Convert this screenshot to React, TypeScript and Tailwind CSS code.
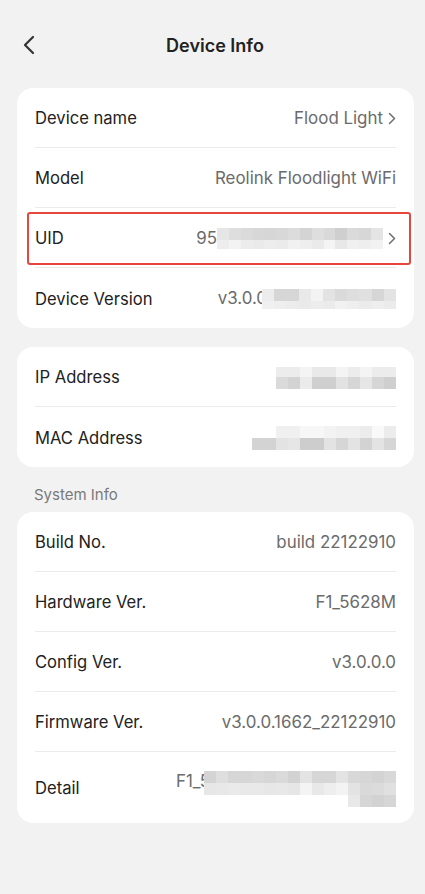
import React from "react";

function Pix({ rows, width }: { rows: { h: number; cells: string[]; offset?: number }[]; width: number }) {
  return (
    <div className="flex flex-col" style={{ width }}>
      {rows.map((r, i) => {
        const cw = (width - (r.offset || 0)) / r.cells.length;
        return (
          <div key={i} className="flex" style={{ height: r.h, marginLeft: r.offset || 0 }}>
            {r.cells.map((c, j) => (
              <div key={j} style={{ width: cw, height: r.h, background: c }} />
            ))}
          </div>
        );
      })}
    </div>
  );
}

function Chevron() {
  return (
    <svg width="8" height="13" viewBox="0 0 8 13" className="ml-[5px] shrink-0">
      <path d="M1.5 1.5 L6.5 6.5 L1.5 11.5" fill="none" stroke="#6e6e6e" strokeWidth="1.5" strokeLinecap="round" strokeLinejoin="round" />
    </svg>
  );
}

function Row({ label, children, last, tall }: { label: string; children?: React.ReactNode; last?: boolean; tall?: boolean }) {
  return (
    <div className={`mx-[18px] pt-[2px] flex items-center justify-between ${tall ? "h-[71px]" : "h-[60px]"} ${last ? "" : "border-b border-[#ebebeb]"}`}>
      <span className="text-[16.6px] text-[#222222] whitespace-nowrap">{label}</span>
      <div className="flex items-center text-[16.9px] text-[#6b6b6b] whitespace-nowrap">{children}</div>
    </div>
  );
}

export default function App() {
  return (
    <div className="min-h-[894px] w-[425px] bg-[#f2f2f2] pb-[40px]" style={{ fontFamily: "Inter, 'Noto Sans', sans-serif" }}>
      <div className="relative h-[88px] flex items-center justify-center">
        <svg width="14" height="20" viewBox="0 0 14 20" className="absolute left-[22px] top-[35px]">
          <path d="M11 2 L3 10 L11 18" fill="none" stroke="#333333" strokeWidth="2.2" strokeLinecap="round" strokeLinejoin="round" />
        </svg>
        <span className="text-[18px] font-semibold text-[#222222] mt-[2px] ml-[5px]">Device Info</span>
      </div>

      <div className="ml-[17px] w-[397px] bg-white rounded-[16px]">
        <Row label="Device name">
          <span>Flood Light</span>
          <Chevron />
        </Row>
        <Row label="Model">
          <span>Reolink Floodlight WiFi</span>
        </Row>
        <div className="relative">
          <div className="absolute left-[10px] right-[3px] top-[4px] bottom-[3px] border-2 border-[#e8463c] rounded-[3px] z-10" />
          <Row label="UID">
            <span>95</span>
            <Pix
              width={166}
              rows={[
                { h: 12, cells: ["#e6e6e6", "#dedede", "#dadada", "#d7d7d7", "#d6d6d6", "#d8d8d8", "#dcdcdc", "#d4d4d4", "#dedede", "#d9d9d9", "#cfcfcf", "#dadada", "#d7d7d7", "#e4e4e4"] },
                { h: 9, cells: ["#ededed", "#f3f3f3", "#ececec", "#eaeaea", "#ededed", "#ebebeb", "#f1f1f1", "#eeeeee", "#eaeaea", "#f4f4f4", "#e8e8e8", "#f0f0f0", "#eeeeee", "#f2f2f2"] },
              ]}
            />
            <Chevron />
          </Row>
        </div>
        <Row label="Device Version" last>
          <span>v3.0.0</span>
          <div className="-ml-[5px]">
            <Pix
              width={134}
              rows={[
                { h: 12, cells: ["#ececec", "#d6d6d6", "#d6d6d6", "#e9e9e9", "#f3f3f3", "#e3e3e3", "#dadada", "#dedede", "#e0e0e0", "#d6d6d6", "#e3e3e3"] },
                { h: 8, cells: ["#f0f0f0", "#eeeeee", "#ececec", "#eaeaea", "#ededed", "#ebebeb", "#f1f1f1", "#eeeeee", "#ebebeb", "#eeeeee", "#ebebeb"] },
              ]}
            />
          </div>
        </Row>
      </div>

      <div className="ml-[17px] w-[397px] mt-[19px] bg-white rounded-[16px]">
        <Row label="IP Address">
          <Pix
            width={120}
            rows={[
              { h: 10, cells: ["#ececec", "#ececec", "#f4f4f4", "#e9e9e9", "#e9e9e9", "#f4f4f4", "#ececec", "#f4f4f4", "#ececec", "#ececec"] },
              { h: 12, cells: ["#dadada", "#d3d3d3", "#ebebeb", "#cfcfcf", "#cfcfcf", "#e2e2e2", "#d6d6d6", "#e6e6e6", "#d6d6d6", "#cfcfcf"] },
            ]}
          />
        </Row>
        <Row label="MAC Address" last>
          <Pix
            width={144}
            rows={[
              { h: 12, offset: 24, cells: ["#f0f0f0", "#f0f0f0", "#f7f7f7", "#f7f7f7", "#f3f3f3", "#f0f0f0", "#f0f0f0", "#ececec", "#f9f9f9", "#ececec"] },
              { h: 12, cells: ["#d3d3d3", "#d3d3d3", "#e3e3e3", "#e6e6e6", "#cdcdcd", "#cdcdcd", "#e3e3e3", "#d6d6d6", "#e3e3e3", "#d3d3d3", "#e3e3e3", "#d6d6d6"] },
            ]}
          />
        </Row>
      </div>

      <div className="px-[34px] pt-[19px] pb-[9px] h-[45px] text-[15px] leading-[17px] text-[#7a7a7a]">System Info</div>

      <div className="ml-[17px] w-[397px] bg-white rounded-[16px]">
        <Row label="Build No.">
          <span>build 22122910</span>
        </Row>
        <Row label="Hardware Ver.">
          <span>F1_5628M</span>
        </Row>
        <Row label="Config Ver.">
          <span>v3.0.0.0</span>
        </Row>
        <Row label="Firmware Ver.">
          <span>v3.0.0.1662_22122910</span>
        </Row>
        <Row label="Detail" last tall>
          <div className="flex flex-col items-end">
            <div className="flex items-start">
              <span className="leading-[20px] -mr-[6px]">F1_5</span>
              <Pix
                width={192}
                rows={[
                  { h: 12, cells: ["#d4d4d4", "#dedede", "#d6d6d6", "#d6d6d6", "#d9d9d9", "#d6d6d6", "#dadada", "#d2d2d2", "#e3e3e3", "#d6d6d6", "#d6d6d6", "#e3e3e3", "#d8d8d8", "#d6d6d6", "#d3d3d3", "#d8d8d8"] },
                  { h: 12, cells: ["#e7e7e7", "#e8e8e8", "#eaeaea", "#e9e9e9", "#e9e9e9", "#e7e7e7", "#e8e8e8", "#e6e6e6", "#f4f4f4", "#e8e8e8", "#eeeeee", "#f3f3f3", "#e3e3e3", "#d9d9d9", "#dbdbdb", "#e0e0e0"] },
                  { h: 12, offset: 144, cells: ["#e8e8e8", "#d6d6d6", "#d2d2d2", "#d6d6d6"] },
                ]}
              />
            </div>
          </div>
        </Row>
      </div>
    </div>
  );
}
